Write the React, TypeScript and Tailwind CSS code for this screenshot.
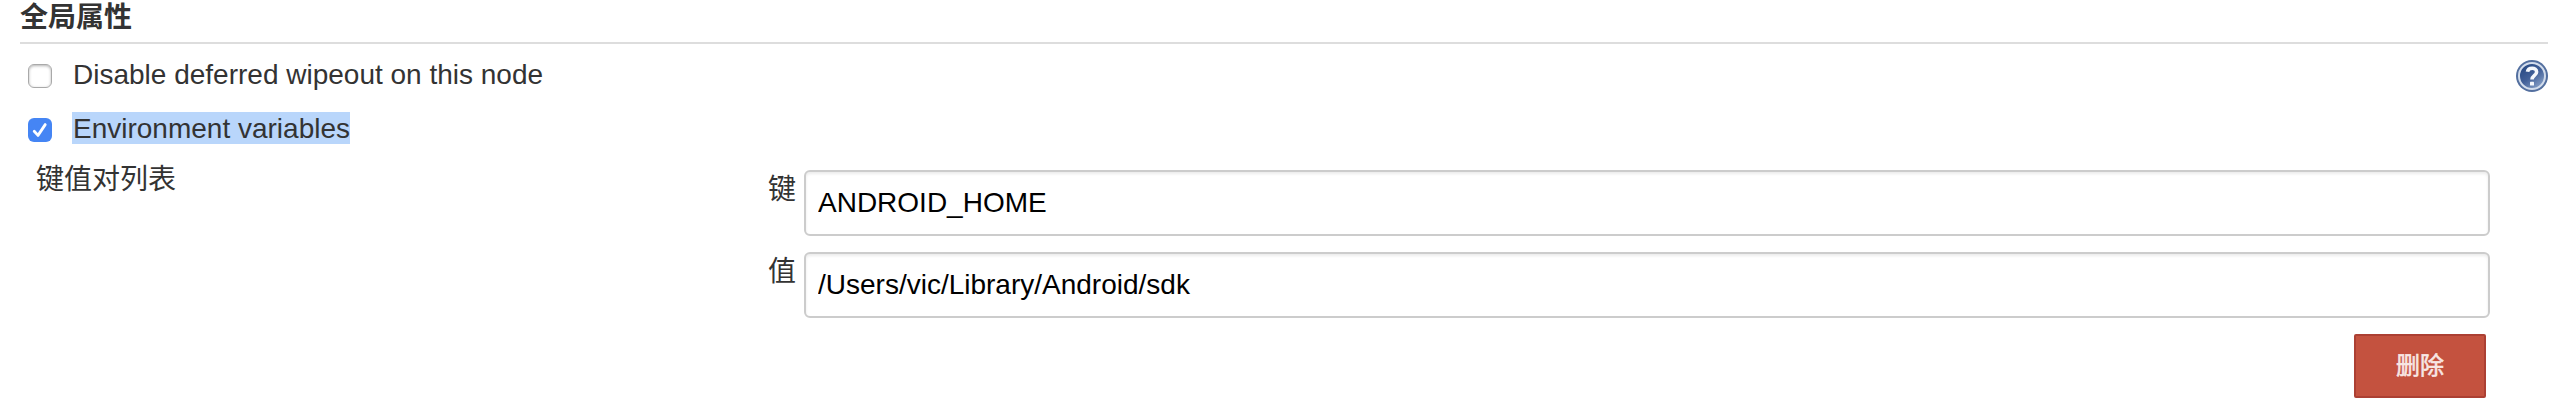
import React from "react";

const sans = "font-['Liberation_Sans','Noto_Sans_CJK_SC',sans-serif]";

function Checkbox({ checked = false }: { checked?: boolean }) {
  return (
    <span
      role="checkbox"
      aria-checked={checked}
      className={
        checked
          ? "block size-6 shrink-0 rounded-[6px] bg-[#4585f4]"
          : "block size-6 shrink-0 rounded-[6px] border border-[#a9a9a9] bg-white shadow-[inset_0_1px_3px_rgba(0,0,0,0.3)]"
      }
    >
      {checked && (
        <svg viewBox="0 0 24 24" className="size-6" fill="none" stroke="white" strokeWidth="2.8" strokeLinecap="round" strokeLinejoin="round">
          <path d="M6.2 13.2 L10 17.4 L17.2 6.6" />
        </svg>
      )}
    </span>
  );
}

function HelpIcon() {
  return (
    <svg viewBox="0 0 32 32" className="mt-4 size-8 shrink-0" aria-label="help">
      <defs>
        <linearGradient id="ball" x1="0.1" y1="0.1" x2="0.8" y2="1">
          <stop offset="0" stopColor="#254781" />
          <stop offset="0.5" stopColor="#436199" />
          <stop offset="1" stopColor="#8da6cb" />
        </linearGradient>
      </defs>
      <circle cx="16" cy="16" r="16" fill="#536f9f" />
      <circle cx="16" cy="16" r="13" fill="url(#ball)" stroke="#d3ddec" strokeWidth="2" />
      <path d="M11.5 11.8 C12 7.2 20.6 7 20.6 11.9 C20.6 15.5 16 15.2 16 19.6" fill="none" stroke="#f5f8fc" strokeWidth="3.6" />
      <rect x="14" y="21.8" width="4" height="3.8" rx="0.6" fill="#f5f8fc" />
    </svg>
  );
}

function Field({ label, value }: { label: string; value: string }) {
  return (
    <div className="flex h-[66px]">
      <span className="mt-1 w-9 shrink-0 leading-8">{label}</span>
      <input
        readOnly
        value={value}
        aria-label={label}
        className="h-[66px] w-[1686px] rounded-[6px] border-2 border-[#ccc] bg-white px-3 pb-px text-black shadow-[inset_0_2px_3px_rgba(0,0,0,0.08)] outline-none"
      />
    </div>
  );
}

export default function App() {
  return (
    <main className={`h-[410px] w-[2568px] overflow-hidden bg-white px-5 text-[28px] text-[#333] ${sans}`}>
      <h2 className="h-11 border-b-2 border-[#ddd] pt-0.5 font-bold leading-8">全局属性</h2>
      <div className="flex h-[68px] justify-between pl-2">
        <label className="flex">
          <span className="mt-5"><Checkbox /></span>
          <span className="ml-[21px] mt-[15px] leading-8">Disable deferred wipeout on this node</span>
        </label>
        <HelpIcon />
      </div>
      <label className="flex h-[46px] pl-2">
        <span className="mt-1.5"><Checkbox checked /></span>
        <span className="ml-5 h-8 bg-[#b9d6fb] pl-px pt-px leading-8">Environment variables</span>
      </label>
      <div className="flex">
        <div className="ml-4 mt-1.5 w-[732px] leading-8">键值对列表</div>
        <div className="mt-3 w-[1722px]">
          <div className="flex flex-col gap-4">
            <Field label="键" value="ANDROID_HOME" />
            <Field label="值" value="/Users/vic/Library/Android/sdk" />
          </div>
          <div className="mt-4 flex justify-end pr-1">
            <button className="h-16 w-[132px] rounded-[2px] border-2 border-[#ac4033] bg-[#c4523f] text-[24px] leading-none text-[#f8e7e4] [-webkit-text-stroke:0.6px_#f8e7e4]">
              删除
            </button>
          </div>
        </div>
      </div>
    </main>
  );
}
